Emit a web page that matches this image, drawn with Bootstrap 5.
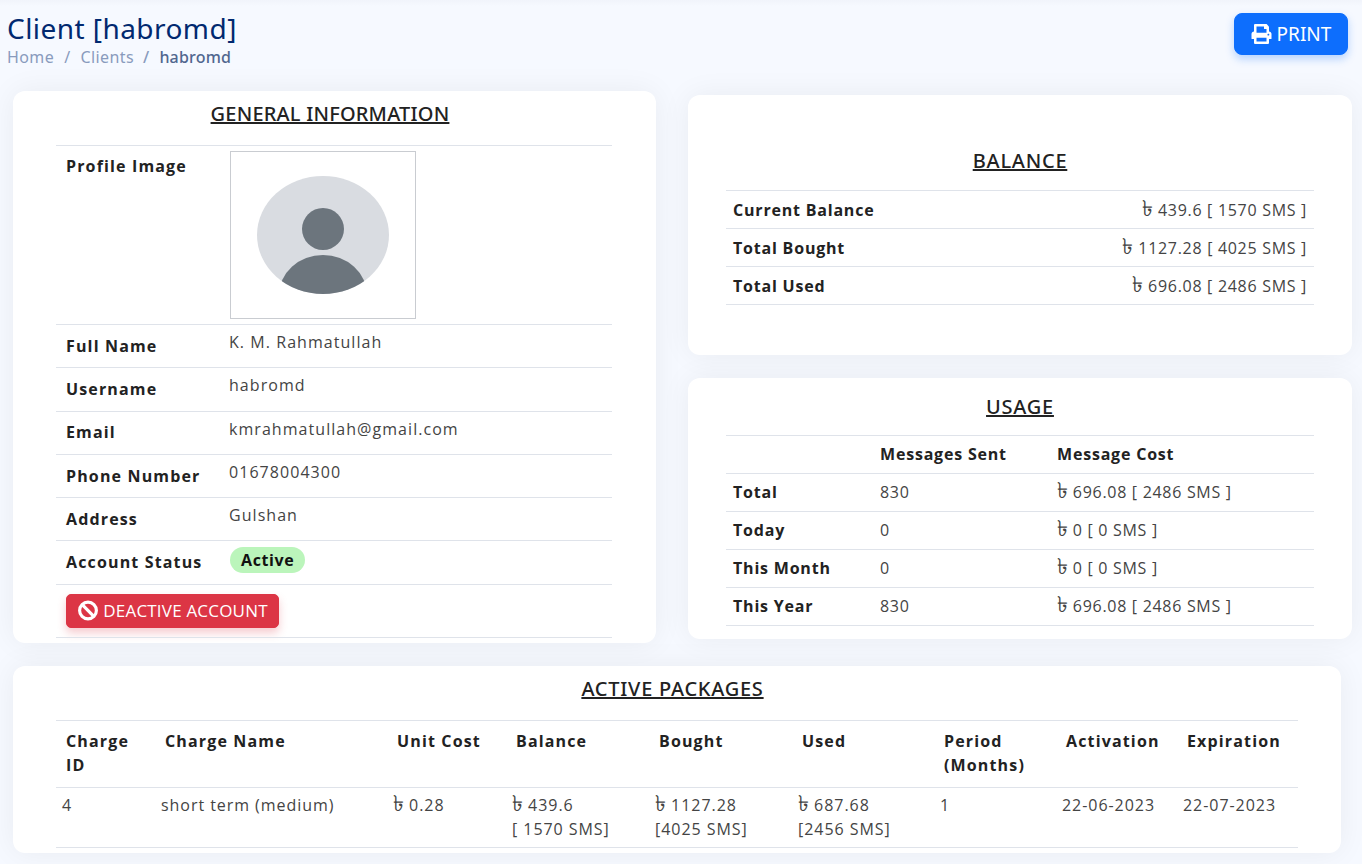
<!DOCTYPE html>
<html lang="en"><head><meta charset="utf-8"><title>Client</title>
<link href="https://cdn.jsdelivr.net/npm/bootstrap@5.3.0/dist/css/bootstrap.min.css" rel="stylesheet">
<style>
html,body{height:864px;overflow:hidden}
body{background:linear-gradient(#f1f4fb 0,#f6f9ff 6px,#f6f9ff 100%);font-family:"Open Sans",sans-serif;color:#444}
.page-head{height:91px;padding:10px 14px 0 7px}
.page-title{font-family:"Noto Sans",sans-serif;font-size:28px;line-height:36px;letter-spacing:.45px;color:#012970;margin:0 0 1px;font-weight:400}
.crumbs{font-family:"Noto Sans",sans-serif;font-size:16px;line-height:20px;letter-spacing:.4px;margin:0;--bs-breadcrumb-divider-color:#899bbd;--bs-breadcrumb-item-padding-x:10px}
.crumbs .breadcrumb-item,.crumbs a{color:#899bbd;text-decoration:none}
.crumbs .breadcrumb-item.active{color:#51678f;font-weight:500;letter-spacing:.2px;margin-left:-1px}
.print-btn{height:42px;width:114px;margin-top:3px;border-radius:8px;font-size:19px;font-family:"Noto Sans",sans-serif;box-shadow:0 4px 8px rgba(13,110,253,.28);padding:0;display:flex;align-items:center;justify-content:center;gap:5px}
.print-btn svg{width:21px;height:20px;fill:currentColor}
.top-grid{display:grid;grid-template-columns:643px 664px;column-gap:32px;padding-left:13px}
.right-stack{padding-top:4px;display:flex;flex-direction:column;gap:23px}
.panel{background:#fff;border:0;border-radius:12px;box-shadow:0 0 30px rgba(0,0,0,.06)}
.panel-left{height:552px;padding:0 44px 0 43px}
.panel-bal{height:260px;padding:0 38px}
.panel-use{height:261px;padding:0 38px}
.panel-pack{width:1328px;height:187px;margin:23px 0 0 13px;padding:0 43px}
.sec-title{font-family:"Noto Sans",sans-serif;font-size:20px;letter-spacing:.75px;font-weight:500;color:#222;text-decoration:underline;text-align:center;text-transform:uppercase;margin:0;line-height:24px}
.panel-left .sec-title{letter-spacing:.2px;padding:11px 8px 19px 0}
.panel-bal .sec-title{padding:54px 0 17px}
.panel-use .sec-title{padding:17px 0 16px}
.panel-pack .sec-title{padding:11px 9px 19px 0}
.info-table{margin:0;table-layout:fixed;font-size:16px;--bs-table-border-color:#dfe3ea;color:#444}
.info-table th,.info-table td{color:#444;letter-spacing:1.05px;border-bottom-width:1px}
.info-table tr:first-child>*{border-top:1px solid #dfe3ea}
.info-table th{color:#222;font-weight:700}
.general th{padding:0 0 1px 10px;vertical-align:middle;letter-spacing:1.15px}
.general td{padding:6px 0 0 0;vertical-align:top;height:43.3px;line-height:22px}
.general tr.photo th{vertical-align:top;padding-top:8px}
.general tr.photo td{padding:5px 0 5px;height:178px}
.general tr.act td{padding:9px 0 8px 10px;height:53px}
.photo-box{width:186px;height:168px;border:1px solid #c9ccd1;display:block;margin-left:1px}
.status-pill{background:#bbf5bb;color:#111;font-weight:700;border-radius:14px;padding:3px 11px;font-size:16px;line-height:20px;letter-spacing:.6px;display:inline-block;margin:0 0 0 1px}
.off-btn{height:34px;width:213px;padding:0;border-radius:5px;font-size:17px;box-shadow:0 5px 8px rgba(220,53,69,.25);display:flex;align-items:center;justify-content:center;gap:4px;letter-spacing:.2px}
.off-btn svg{width:22px;height:21px}
.sum th,.sum td{height:38px;padding:0 7px;vertical-align:middle;line-height:22px}
.sum th{letter-spacing:.8px}
.sum td{letter-spacing:.7px}
.use th,.use td{padding-bottom:1px}
.pack th{padding:8px 0 10px 10px;vertical-align:top;line-height:24px;letter-spacing:1.15px}
.pack td{padding:5px 0 0 6px;vertical-align:top;line-height:24px;height:60px;letter-spacing:.95px}
.pack tr.hd th{height:66px}
.tk{font-size:22px;line-height:0;letter-spacing:0}
.c1{width:173px}.u1{width:147px}.u2{width:177px}
.p1{width:99px}.p2{width:232px}.p3{width:119px}.p4{width:143px}.p5{width:143px}.p6{width:142px}.p7{width:122px}.p8{width:121px}
</style></head><body>
<div class="page-head d-flex justify-content-between align-items-start">
 <div><h1 class="page-title">Client [habromd]</h1>
 <nav><ol class="breadcrumb crumbs"><li class="breadcrumb-item"><a href="#">Home</a></li><li class="breadcrumb-item"><a href="#">Clients</a></li><li class="breadcrumb-item active">habromd</li></ol></nav></div>
 <button class="btn btn-primary print-btn"><svg viewBox="0 0 512 512"><path d="M448 192V77.25c0-8.49-3.37-16.62-9.37-22.63L393.37 9.37c-6-6-14.14-9.37-22.63-9.37H96C78.33 0 64 14.33 64 32v160c-35.35 0-64 28.65-64 64v112c0 8.84 7.16 16 16 16h48v96c0 17.67 14.33 32 32 32h320c17.67 0 32-14.33 32-32v-96h48c8.84 0 16-7.16 16-16V256c0-35.35-28.65-64-64-64zm-64 256H128v-96h256v96zm0-224H128V64h192v48c0 8.84 7.16 16 16 16h48v96zm48 72c-13.25 0-24-10.75-24-24 0-13.26 10.75-24 24-24s24 10.74 24 24c0 13.25-10.75 24-24 24z"/></svg>PRINT</button>
</div>
<div class="top-grid">
 <div class="card panel panel-left">
  <h5 class="sec-title">General Information</h5>
  <table class="table info-table general">
   <colgroup><col class="c1"><col></colgroup>
   <tbody>
   <tr class="photo"><th>Profile Image</th><td><svg class="photo-box" viewBox="0 0 184 166"><defs><clipPath id="cp"><ellipse cx="92" cy="83" rx="66" ry="59"/></clipPath></defs><ellipse cx="92" cy="83" rx="66" ry="59" fill="#d9dce1"/><ellipse cx="92" cy="77" rx="21" ry="21" fill="#6c757d"/><ellipse cx="92" cy="143" rx="44" ry="40" fill="#6c757d" clip-path="url(#cp)"/></svg></td></tr>
   <tr><th>Full Name</th><td>K. M. Rahmatullah</td></tr>
   <tr><th>Username</th><td>habromd</td></tr>
   <tr><th>Email</th><td>kmrahmatullah@gmail.com</td></tr>
   <tr><th>Phone Number</th><td>01678004300</td></tr>
   <tr><th>Address</th><td>Gulshan</td></tr>
   <tr><th>Account Status</th><td><span class="status-pill">Active</span></td></tr>
   <tr class="act"><td colspan="2"><button class="btn btn-danger off-btn"><svg viewBox="0 0 20 20" fill="none" stroke="#fff" stroke-width="3"><circle cx="10" cy="10" r="8"/><path d="M4.5 4.5l11 11"/></svg>DEACTIVE ACCOUNT</button></td></tr>
   </tbody>
  </table>
 </div>
 <div class="right-stack">
  <div class="card panel panel-bal">
   <h5 class="sec-title">Balance</h5>
   <table class="table info-table sum"><tbody>
    <tr><th>Current Balance</th><td class="text-end"><span class="tk">৳</span> 439.6 [ 1570 SMS ]</td></tr>
    <tr><th>Total Bought</th><td class="text-end"><span class="tk">৳</span> 1127.28 [ 4025 SMS ]</td></tr>
    <tr><th>Total Used</th><td class="text-end"><span class="tk">৳</span> 696.08 [ 2486 SMS ]</td></tr>
   </tbody></table>
  </div>
  <div class="card panel panel-use">
   <h5 class="sec-title">Usage</h5>
   <table class="table info-table sum use"><colgroup><col class="u1"><col class="u2"><col></colgroup><tbody>
    <tr><th></th><th>Messages Sent</th><th>Message Cost</th></tr>
    <tr><th>Total</th><td>830</td><td><span class="tk">৳</span> 696.08 [ 2486 SMS ]</td></tr>
    <tr><th>Today</th><td>0</td><td><span class="tk">৳</span> 0 [ 0 SMS ]</td></tr>
    <tr><th>This Month</th><td>0</td><td><span class="tk">৳</span> 0 [ 0 SMS ]</td></tr>
    <tr><th>This Year</th><td>830</td><td><span class="tk">৳</span> 696.08 [ 2486 SMS ]</td></tr>
   </tbody></table>
  </div>
 </div>
</div>
<div class="card panel panel-pack">
 <h5 class="sec-title">Active Packages</h5>
 <table class="table info-table pack"><colgroup><col class="p1"><col class="p2"><col class="p3"><col class="p4"><col class="p5"><col class="p6"><col class="p7"><col class="p8"><col></colgroup><tbody>
  <tr class="hd"><th>Charge<br>ID</th><th>Charge Name</th><th>Unit Cost</th><th>Balance</th><th>Bought</th><th>Used</th><th>Period<br>(Months)</th><th>Activation</th><th>Expiration</th></tr>
  <tr><td>4</td><td>short term (medium)</td><td><span class="tk">৳</span> 0.28</td><td><span class="tk">৳</span> 439.6<br>[ 1570 SMS]</td><td><span class="tk">৳</span> 1127.28<br>[4025 SMS]</td><td><span class="tk">৳</span> 687.68<br>[2456 SMS]</td><td>1</td><td>22-06-2023</td><td>22-07-2023</td></tr>
 </tbody></table>
</div>
</body></html>
